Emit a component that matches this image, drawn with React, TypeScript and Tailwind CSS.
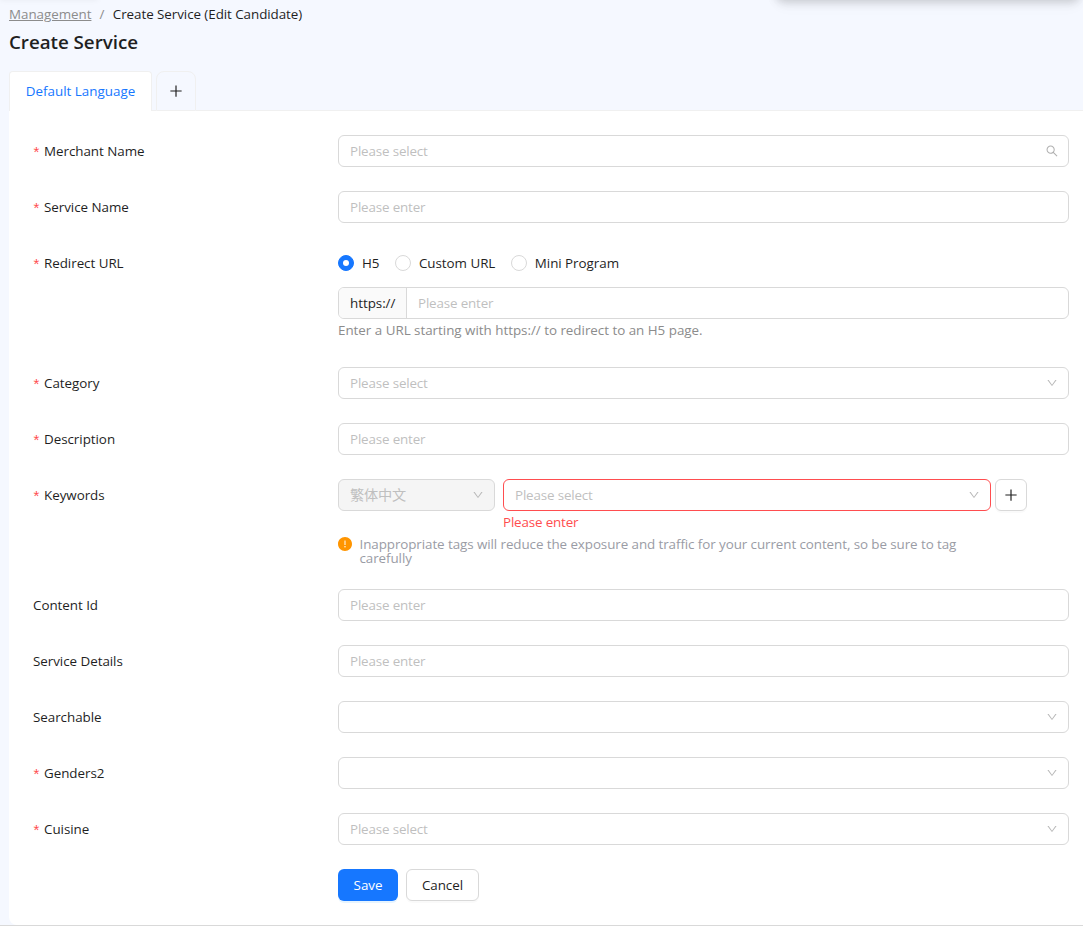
import type { ReactNode } from 'react';
import { AiFillExclamationCircle, AiOutlineDown, AiOutlinePlus, AiOutlineSearch } from 'react-icons/ai';
import clsx from 'clsx';

function FormItem({ label, required, children }: { label: string; required?: boolean; children: ReactNode }) {
  return (
    <div className="flex items-start">
      <div className="flex h-8 w-[305px] flex-none items-center">
        {required && (
          <span className="mr-1 w-[7px] pt-px text-center font-['Liberation_Sans'] text-[15px] text-[#ff4d4f]">*</span>
        )}
        <span>{label}</span>
      </div>
      <div className="min-w-0 flex-1">{children}</div>
    </div>
  );
}

function Input({ placeholder = 'Please enter' }: { placeholder?: string }) {
  return (
    <div className="flex h-8 items-center rounded-md border border-[#d9d9d9] bg-white px-[11px] tracking-[-0.16px] text-[#bfbfbf]">
      {placeholder}
    </div>
  );
}

type SelectProps = {
  text?: string;
  search?: boolean;
  className?: string;
};

function Select({ text, search, className }: SelectProps) {
  return (
    <div
      className={clsx(
        'flex h-8 items-center justify-between rounded-md border pr-2.5 pl-[11px] tracking-[-0.16px] text-[#bfbfbf]',
        className ?? 'border-[#d9d9d9] bg-white',
      )}
    >
      <span>{text}</span>
      {search ? (
        <AiOutlineSearch className="-mr-px size-3.5 text-[#b0b0b0]" />
      ) : (
        <AiOutlineDown className="size-3 text-[#b8b8b8]" />
      )}
    </div>
  );
}

function Radio({ label, checked }: { label: string; checked?: boolean }) {
  return (
    <span className="flex items-center">
      <span
        className={clsx(
          'flex size-4 items-center justify-center rounded-full border',
          checked ? 'border-[#1677ff] bg-[#1677ff]' : 'border-[#d9d9d9] bg-white',
        )}
      >
        {checked && <span className="size-1.5 rounded-full bg-white" />}
      </span>
      <span className="pr-[7.5px] pl-2">{label}</span>
    </span>
  );
}

export default function App() {
  return (
    <div className="relative flex h-[926px] flex-col overflow-hidden border-b border-[#d9d9d9] bg-[#f5f8ff] pl-[9px] font-['Open_Sans','Noto_Sans_CJK_SC',sans-serif] text-[13.4px] leading-[22px] tracking-[-0.04px] text-[#1f1f1f]">
      {/* shadows of the panels above the page */}
      <div className="absolute -top-10 left-0 h-10 w-[98px] shadow-[0_0_6px_0_rgba(0,0,0,0.06)]" />
      <div className="absolute -top-10 left-[776px] h-10 w-[304px] rounded-lg shadow-[0_2px_10px_0_rgba(0,0,0,0.18),0_6px_16px_0_rgba(0,0,0,0.03)]" />

      <nav className="flex h-[22px] pt-[3px]">
        <span className="text-[#8c8c8c] underline">Management</span>
        <span className="mx-2 text-[#8c8c8c]">/</span>
        <span className="pl-[0.5px] tracking-[-0.06px]">Create Service (Edit Candidate)</span>
      </nav>
      <h1 className="mt-1.5 h-7 text-[18.8px] leading-7 font-semibold">Create Service</h1>

      <div className="mt-[15px] flex h-10 flex-none">
        <div className="flex w-[143px] items-center justify-center rounded-t border border-b-0 border-[#f0f0f0] bg-white pb-px tracking-normal text-[#1677ff]">
          Default Language
        </div>
        <div className="w-1 border-b border-[#f0f0f0]" />
        <div className="flex w-10 items-center justify-center rounded-t-lg border border-[#f0f0f0]">
          <AiOutlinePlus className="size-4" />
        </div>
        <div className="flex-1 border-b border-[#f0f0f0]" />
      </div>

      <div className="flex flex-1 flex-col gap-6 rounded-bl-lg bg-white pt-6 pr-3.5 pl-6">
        <FormItem label="Merchant Name" required>
          <Select text="Please select" search />
        </FormItem>
        <FormItem label="Service Name" required>
          <Input />
        </FormItem>
        <FormItem label="Redirect URL" required>
          <div className="flex h-8 items-center gap-2">
            <Radio label="H5" checked />
            <Radio label="Custom URL" />
            <Radio label="Mini Program" />
          </div>
          <div className="mt-2 flex h-8 overflow-hidden rounded-md border border-[#d9d9d9]">
            <span className="flex w-[68px] items-center border-r border-[#d9d9d9] bg-[#fafafa] pl-[11px]">https://</span>
            <span className="flex flex-1 items-center pl-[11px] tracking-[-0.16px] text-[#bfbfbf]">Please enter</span>
          </div>
          <div className="h-6 tracking-[-0.02px] text-[#8c8c8c]">
            Enter a URL starting with https:// to redirect to an H5 page.
          </div>
        </FormItem>
        <FormItem label="Category" required>
          <Select text="Please select" />
        </FormItem>
        <FormItem label="Description" required>
          <Input />
        </FormItem>
        <FormItem label="Keywords" required>
          <div className="flex">
            <Select text="繁体中文" className="w-[157px] border-[#d9d9d9] bg-[#f5f5f5] text-[14.2px]" />
            <div className="ml-2 w-[488px]">
              <Select text="Please select" className="border-[#ff4d4f] bg-white" />
              <div className="h-[22px] tracking-[-0.16px] text-[#ff4d4f]">Please enter</div>
            </div>
            <button className="ml-1 flex size-8 items-center justify-center rounded-md border border-[#d9d9d9] bg-white shadow-[0_2px_0_rgba(0,0,0,0.02)]">
              <AiOutlinePlus className="size-4" />
            </button>
          </div>
          <div className="mt-1 flex h-7 leading-[14px] tracking-[-0.08px] text-[#9a9ca5]">
            <AiFillExclamationCircle className="-mt-px -ml-px size-4 flex-none text-[#ff9500]" />
            <p className="ml-[6.5px] w-[610px]">
              Inappropriate tags will reduce the exposure and traffic for your current content, so be sure to tag
              <br />
              carefully
            </p>
          </div>
        </FormItem>
        <FormItem label="Content Id">
          <Input />
        </FormItem>
        <FormItem label="Service Details">
          <Input />
        </FormItem>
        <FormItem label="Searchable">
          <Select />
        </FormItem>
        <FormItem label="Genders2" required>
          <Select />
        </FormItem>
        <FormItem label="Cuisine" required>
          <Select text="Please select" />
        </FormItem>
        <div className="flex gap-2 pl-[305px]">
          <button className="h-8 w-[60px] rounded-md bg-[#1677ff] text-white shadow-[0_2px_0_rgba(5,145,255,0.1)]">
            Save
          </button>
          <button className="h-8 w-[73px] rounded-md border border-[#d9d9d9] bg-white shadow-[0_2px_0_rgba(0,0,0,0.02)]">
            Cancel
          </button>
        </div>
      </div>
    </div>
  );
}
